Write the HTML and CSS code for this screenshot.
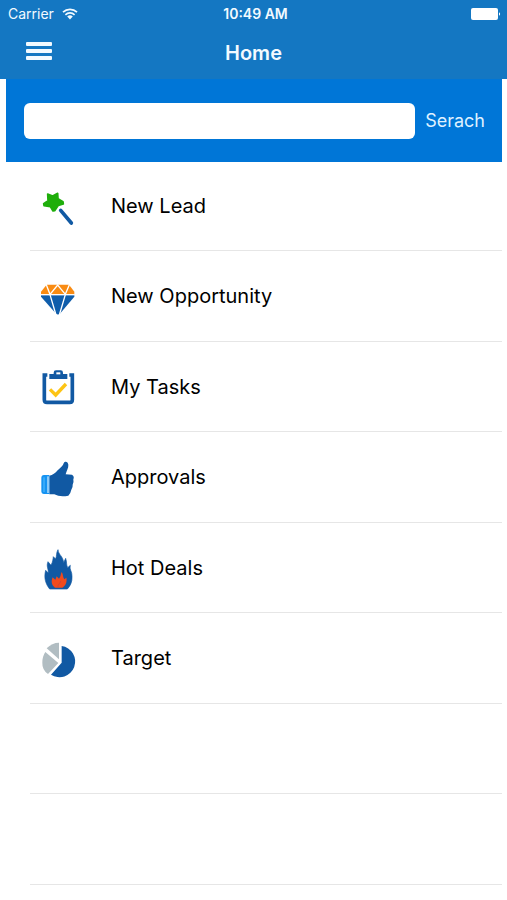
FILE: index.html
```
<!DOCTYPE html>
<html lang="en">
<head>
<meta charset="utf-8">
<meta name="viewport" content="width=device-width, initial-scale=1">
<title>Home</title>
<link rel="stylesheet" href="styles.css">
</head>
<body>
<header class="header">
  <div class="status">
    <div class="carrier">
      <span>Carrier</span>
      <svg class="wifi" viewBox="0 0 16 12" aria-hidden="true">
        <path d="M1 4.2a10.2 10.2 0 0 1 14 0M3.4 6.8a6.7 6.7 0 0 1 9.2 0" fill="none" stroke="currentColor" stroke-width="1.7"/>
        <path d="M8 11.4 5.2 8.6a4 4 0 0 1 5.6 0z" fill="currentColor"/>
      </svg>
    </div>
    <span class="time">10:49 AM</span>
    <svg class="battery" viewBox="0 0 30 12" aria-hidden="true">
      <rect width="27" height="12" rx="2" fill="currentColor"/>
      <path d="M28 4.2a2 2 0 0 1 0 3.6z" fill="currentColor"/>
    </svg>
  </div>
  <div class="nav">
    <button class="menu" type="button" aria-label="Menu">
      <svg viewBox="0 0 26 20" aria-hidden="true">
        <g fill="currentColor"><rect y="1" width="26" height="4" rx="1"/><rect y="8" width="26" height="4" rx="1"/><rect y="15" width="26" height="4" rx="1"/></g>
      </svg>
    </button>
    <h1 class="title">Home</h1>
  </div>
</header>
<main class="main">
  <form class="search">
    <input class="field" type="text" aria-label="Search text">
    <button class="go" type="button">Serach</button>
  </form>
  <ul class="list">
    <li class="row"><a class="link" href="#">
      <svg class="icon" viewBox="24 18 120 120" aria-hidden="true">
        <path d="M53 42 68 48 83 40 84 56 99 65 100 72 85 76 74 92 69 93 61 80 42 77 41 71 54 62z" fill="#1fae0b" stroke="#1fae0b" stroke-width="5" stroke-linejoin="round"/>
        <path d="M92 91 124 129" stroke="#1159a3" stroke-width="11" stroke-linecap="round"/>
      </svg>New Lead</a></li>
    <li class="row"><a class="link" href="#">
      <svg class="icon" viewBox="24 18 120 120" aria-hidden="true">
        <path d="M50 44H117L133 65V73H33V65z" fill="#f98b12"/>
        <path d="M33 76H133V80L91 130Q84 137 77 130L33 80z" fill="#0f5dab"/>
        <path d="M33 74H133" stroke="#fff" stroke-width="3"/>
        <path d="M48 42 60 73 83 45 106 73 119 42M60 74 78 135M106 74 88 135" fill="none" stroke="#fff" stroke-width="4"/>
      </svg>New Opportunity</a></li>
    <li class="row"><a class="link" href="#">
      <svg class="icon" viewBox="24 21 120 120" aria-hidden="true">
        <path d="M52 45H43V119Q43 127 51 127H119Q127 127 127 119V45H118" fill="none" stroke="#1159a3" stroke-width="11"/>
        <path d="M58 42H71V38Q71 31 78 31H92Q99 31 99 38V42H112V57H58z" fill="#1159a3"/>
        <path d="M79 37H91V43H79z" fill="#fff"/>
        <path d="M60 88 77 105 108 72" fill="none" stroke="#fdc414" stroke-width="10"/>
      </svg>My Tasks</a></li>
    <li class="row"><a class="link" href="#">
      <svg class="icon" viewBox="24 21 120 120" aria-hidden="true">
        <path d="M58 77C68 75 76 70 83 61 93 52 99 47 101 40 105 32 114 35 115 44 116 54 109 63 107 73L126 74Q134 79 130 88 132 96 128 104 129 112 124 119 122 130 115 137Q90 142 73 133L58 133z" fill="#1159a3"/>
        <path d="M58 75H42Q34 75 34 84V123Q34 132 42 132H58z" fill="#1593f2"/>
        <path d="M42 82V126" stroke="#57bfff" stroke-width="3"/>
        <path d="M54 79V129" stroke="#fff" stroke-width="3"/>
      </svg>Approvals</a></li>
    <li class="row"><a class="link" href="#">
      <svg class="icon" viewBox="24 24 120 120" aria-hidden="true">
        <path d="M59 147C47 132 41 114 47 91L55 99C56 87 48 79 54 65L63 76C69 64 69 56 70 50L77 57C81 47 78 39 84 29 85 44 99 48 101 68L107 55C111 67 108 72 113 83L121 76C117 89 127 94 126 110 127 126 120 139 112 147z" fill="#1159a3" stroke="#1159a3" stroke-width="2"/>
        <path d="M75 143C64 136 63 123 68 112L76 119 80 109 87 116C93 110 91 103 95 96 100 103 98 111 103 118L109 113C112 126 106 138 97 143z" fill="#f04a1c"/>
        <path d="M84 141C82 133 91 132 92 123" fill="none" stroke="#bf4340" stroke-width="2"/>
      </svg>Hot Deals</a></li>
    <li class="row"><a class="link" href="#">
      <svg class="icon" viewBox="24 24 120 120" aria-hidden="true">
        <path d="M95 48A47 47 0 1 1 63 134L95 98z" fill="#1159a3"/>
        <path d="M87 38V88L50 55Q66 38 87 38z" fill="#b1bdc2"/>
        <path d="M46 66 85 99 54 132Q36 119 37 98 37 79 46 66z" fill="#b1bdc2"/>
      </svg>Target</a></li>
    <li class="row"></li>
    <li class="row"></li>
  </ul>
</main>
</body>
</html>
```
FILE: styles.css
```
* {
  box-sizing: border-box;
}

body {
  margin: 0;
  background: #fff;
  color: #000;
  font-family: Inter, "Liberation Sans", sans-serif;
}

button {
  border: 0;
  padding: 0;
  background: none;
  color: inherit;
  font: inherit;
}

svg {
  display: block;
}

.header {
  background: #1477c2;
  color: #f2faff;
}

.status {
  display: grid;
  grid-template-columns: 1fr auto 1fr;
  align-items: center;
  height: 27px;
  padding: 0 6px 0 8px;
  font-size: 14px;
}

.carrier {
  display: flex;
  align-items: center;
  gap: 8px;
}

.wifi {
  width: 16px;
  height: 12px;
}

.time {
  padding-left: 2px;
  font-weight: 600;
}

.battery {
  width: 30px;
  height: 12px;
  justify-self: end;
  color: #fff;
}

.nav {
  display: grid;
  grid-template-columns: 1fr auto 1fr;
  align-items: center;
  height: 52px;
  padding: 0 26px;
}

.menu {
  width: 26px;
  height: 20px;
  margin-bottom: 4px;
}

.title {
  margin: 0;
  font-size: 20px;
  font-weight: 600;
  line-height: 24px;
}

.main {
  padding: 0 5px 0 6px;
}

.search {
  display: flex;
  align-items: center;
  gap: 10px;
  height: 83px;
  padding: 0 17px 0 18px;
  background: #0076d7;
}

.field {
  flex: 1;
  min-width: 0;
  height: 36px;
  border: 0;
  border-radius: 6px;
  padding: 0 10px;
  background: #fff;
  font: inherit;
}

.go {
  color: #dff1ff;
  font-size: 18px;
  line-height: 24px;
}

.list {
  margin: -1px 0 0 24px;
  padding: 0;
  list-style: none;
}

.row {
  height: 90px;
  border-bottom: 1px solid #e6e6e6;
}

.row:nth-child(even) {
  height: 91px;
}

.link {
  display: flex;
  align-items: center;
  gap: 33px;
  height: 100%;
  padding-left: 8px;
  color: inherit;
  font-size: 20px;
  line-height: 24px;
  text-decoration: none;
}

.icon {
  flex: none;
  width: 40px;
  height: 40px;
  overflow: visible;
}
```
